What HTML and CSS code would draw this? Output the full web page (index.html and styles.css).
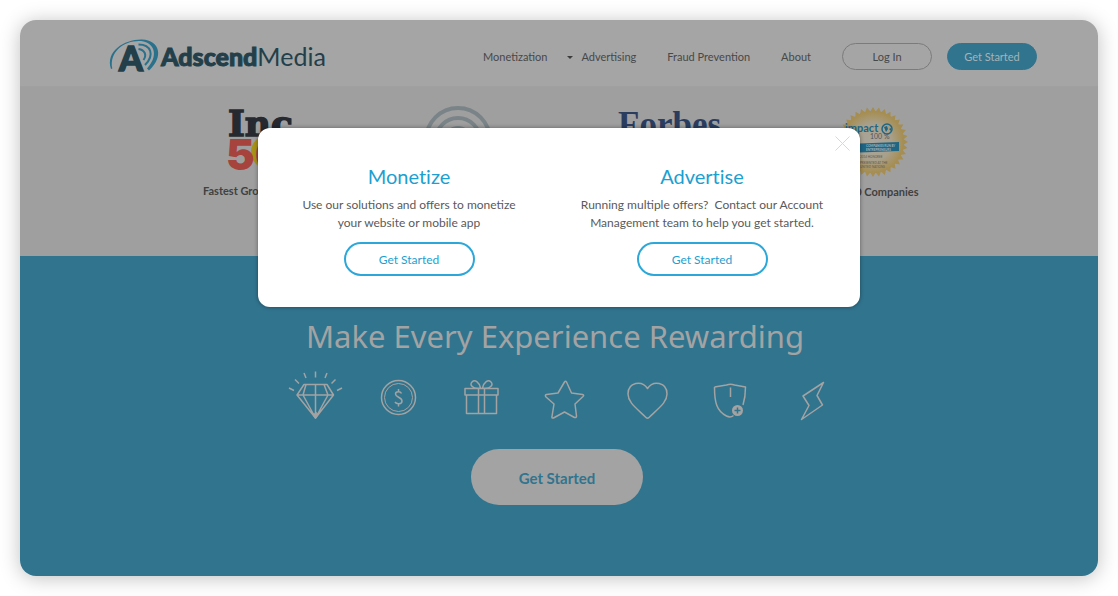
FILE: index.html
```html
<!DOCTYPE html>
<html lang="en">
<head>
<meta charset="utf-8">
<title>AdscendMedia</title>
<link rel="stylesheet" href="styles.css">
</head>
<body>
<div class="frame">
  <header class="header">
    <a class="logo" href="#">
      <svg class="logo-mark" viewBox="0 0 50 34" width="50" height="34" aria-hidden="true">
        <path class="swoosh" d="M2 30C-4 12 16 0 33 .500C51 1 55 18 40 31.500L38 29.500C49 18 47 4 32 2C16 1 0 12 3.300 29.500Z"/>
        <path class="wave" d="M29.500 5.500C42 5.500 46 16 36 26"/>
        <path class="wave" d="M29.500 10C36 11 38 16 34.500 21"/>
        <text class="mark-letter" x="10" y="32">A</text>
      </svg>
      <span class="logo-text"><b>Adscend</b>Media</span>
    </a>
    <nav class="nav">
      <a href="#">Monetization</a>
      <span class="caret"></span>
      <a href="#">Advertising</a>
      <a class="spaced" href="#">Fraud Prevention</a>
      <a class="spaced" href="#">About</a>
      <button class="pill spaced">Log In</button>
      <button class="pill pill-solid">Get Started</button>
    </nav>
  </header>

  <section class="press">
    <figure class="press-item press-inc">
      <svg viewBox="0 0 116 72" width="116" height="72" aria-hidden="true">
        <circle cx="65" cy="45" r="17" fill="#a99317"/>
        <text class="inc-word" x="25" y="29">Inc</text>
        <text class="inc-number" x="23" y="63">500</text>
      </svg>
      <figcaption>Fastest Growing</figcaption>
    </figure>
    <figure class="press-item press-signal">
      <svg viewBox="0 0 92 72" width="92" height="72" aria-hidden="true">
        <g fill="none" stroke="#7a8488" stroke-width="4">
          <circle cx="46" cy="33" r="32"/><circle cx="46" cy="33" r="22"/><circle cx="46" cy="33" r="12"/>
        </g>
      </svg>
    </figure>
    <figure class="press-item press-forbes">
      <svg viewBox="0 0 144 72" width="144" height="72" aria-hidden="true">
        <text class="forbes-word" x="21" y="29">Forbes</text>
      </svg>
    </figure>
    <figure class="press-item press-seal">
      <svg viewBox="0 0 84 73" width="84" height="73" aria-hidden="true">
        <defs>
          <radialGradient id="gold"><stop offset="0" stop-color="#a9a69f"/><stop offset=".6" stop-color="#a8a08b"/><stop offset="1" stop-color="#a68d50"/></radialGradient>
          <path id="tooth" d="M0-35L30.300 17.500H-30.300Z"/>
        </defs>
        <g fill="#a68d50" transform="translate(39 35)">
          <use href="#tooth"/>
          <use href="#tooth" transform="rotate(10)"/>
          <use href="#tooth" transform="rotate(20)"/>
          <use href="#tooth" transform="rotate(30)"/>
          <use href="#tooth" transform="rotate(40)"/>
          <use href="#tooth" transform="rotate(50)"/>
          <use href="#tooth" transform="rotate(60)"/>
          <use href="#tooth" transform="rotate(70)"/>
          <use href="#tooth" transform="rotate(80)"/>
          <use href="#tooth" transform="rotate(90)"/>
          <use href="#tooth" transform="rotate(100)"/>
          <use href="#tooth" transform="rotate(110)"/>
        </g>
        <circle cx="39" cy="35" r="31" fill="url(#gold)"/>
        <text class="seal-name" x="11" y="25">impact</text>
        <circle cx="53" cy="22" r="5" fill="none" stroke="#1f6584" stroke-width="1.500"/>
        <path d="M50 20l3-1 1 3-2 3zM55 22l2-1v3z" fill="#1f6584"/>
        <text class="seal-hundred" x="36" y="32">100 %</text>
        <path d="M12 37l53-2v9l-53 2z" fill="#1f6584"/>
        <text class="seal-band" x="32" y="40">COMPANIES RUN BY</text>
        <text class="seal-band" x="32" y="44">ENTREPRENEURS</text>
        <text class="seal-small" x="26" y="51">2014 HONOREE</text>
        <text class="seal-small" x="26" y="57">PRESENTED AT THE</text>
        <text class="seal-small" x="26" y="61">UNITED NATIONS</text>
      </svg>
      <figcaption>1,000 Companies</figcaption>
    </figure>
  </section>

  <section class="hero">
    <h1>Make Every Experience Rewarding</h1>
    <div class="icons">
      <svg viewBox="0 0 60 60" aria-hidden="true">
        <path d="M19 16.500h23l6.500 10.500L30.500 50 12 27ZM12 27h36.500M21 16.500l-3 10.500L30.500 50 43 27l-4-10.500M30.500 16.500V50M30 45h2"/>
        <path d="M28 46h5l-2.500 4z" fill="currentColor"/>
        <path d="M4 20l5 2.500M10 11.500l4 4M19 5l2 5M30.500 3.500v6M42 5l-2 5M50.500 11.500l-4 4M57 20l-5 2.500"/>
      </svg>
      <svg viewBox="0 0 60 60" aria-hidden="true">
        <circle cx="30.500" cy="29.500" r="17"/><circle cx="30.500" cy="29.500" r="14" stroke-width="1"/>
        <path d="M33.500 25.500c-1-2.500-6-2.500-6 .5 0 3.500 6.500 3 6.500 7 0 3.500-5.500 3.500-7 1M30.500 21v3M30.500 35.500v3"/>
      </svg>
      <svg viewBox="0 0 60 60" aria-hidden="true">
        <path d="M14 20.500h33v6.500H14ZM15.500 27v18.500h30V27M27.500 20.500v25M33.500 20.500v25M29 20C22 21 18 17 21 14c3-3 7 0 8.500 6M32 20c7 1 11-3 8-6-3-3-7 0-8.500 6"/>
      </svg>
      <svg viewBox="0 0 60 60" aria-hidden="true">
        <path d="M30.500 14q1-1.500 2 0l5 11 11 1.500q2 .5.500 2L41 36l1.500 12q0 2-2 1.500L30.500 44l-11 6q-2 .500-1.500-1.500L20 36l-8-7q-1.500-2 .5-2.500L24 25Z"/>
      </svg>
      <svg viewBox="0 0 60 60" aria-hidden="true">
        <path d="M30.500 20.500C25 12 11 14 11 26c0 8 7 13 18 23.500q1.500 1.500 3 0C43 39 50 34 50 26c0-12-14-14-19.500-5.500Z"/>
      </svg>
      <svg viewBox="0 0 60 60" aria-hidden="true">
        <path d="M14.500 19l12-2q4-1.500 8 0l11 2q0 10-2.500 18M14.500 19c0 15 2 24 12 29q4 2 7-.5M30.500 19.500V29"/>
        <circle cx="37.500" cy="42.500" r="5.500" fill="currentColor" stroke="none"/>
        <path class="cutout" d="M34.500 42.500h6M37.500 39.500v6"/>
      </svg>
      <svg viewBox="0 0 60 60" aria-hidden="true">
        <path d="M40.500 14.500L20 28l6 9.500-7.500 14L39.500 37 34 27.500Z"/>
      </svg>
    </div>
    <button class="hero-button">Get Started</button>
  </section>

  <div class="scrim">
    <div class="modal" role="dialog" aria-label="Get started">
      <button class="close" aria-label="Close">
        <svg viewBox="0 0 15 15" width="15" height="15" aria-hidden="true"><path d="M.5.5l14 14M14.500.5L.5 14.500"/></svg>
      </button>
      <div class="choice">
        <h2>Monetize</h2>
        <p>Use our solutions and offers to monetize<br>your website or mobile app</p>
        <button class="choice-button">Get Started</button>
      </div>
      <div class="choice">
        <h2>Advertise</h2>
        <p>Running multiple offers?&nbsp; Contact our Account<br>Management team to help you get started.</p>
        <button class="choice-button">Get Started</button>
      </div>
    </div>
  </div>
</div>
</body>
</html>
```
FILE: styles.css
```css
* { box-sizing: border-box; }
body {
  margin: 0;
  padding: 20px;
  min-height: 100vh;
  display: flex;
  background: #fff;
  font-family: Lato, "Liberation Sans", sans-serif;
}
button { font-family: inherit; padding: 0; cursor: pointer; }
a { color: inherit; text-decoration: none; }
h1, h2, p, figure { margin: 0; font-weight: 400; }
svg { overflow: visible; }

.frame {
  position: relative;
  flex: 1;
  display: flex;
  flex-direction: column;
  border-radius: 16px;
  overflow: hidden;
  box-shadow: 0 2px 20px rgba(0, 0, 0, .25);
}

.header {
  display: flex;
  align-items: center;
  justify-content: space-between;
  height: 67px;
  padding: 5px 61px 0 89px;
  background: #a5a5a5;
  border-bottom: 1px solid #a0a0a0;
}
.logo { display: flex; align-items: center; gap: 2px; color: #233f4a; }
.swoosh { fill: #2a718c; }
.wave { fill: none; stroke: #2a718c; stroke-width: 2; }
.mark-letter {
  font: 900 34px Lato, sans-serif;
  fill: #233f4a;
  stroke: #233f4a;
  stroke-width: 1.5;
}
.logo-text { font-size: 25px; line-height: 30px; }
.logo-text b { font-weight: 900; -webkit-text-stroke: 1px #233f4a; }

.nav { display: flex; align-items: center; padding-top: 1px; font-size: 11px; color: #484848; }
.caret {
  margin: 2px 8px 0 20px;
  border: 3px solid transparent;
  border-top-color: #3c3c3c;
  border-bottom: 0;
}
.spaced { margin-left: 31px; }
.pill {
  width: 90px;
  height: 27px;
  border: 1px solid #7b7b7b;
  border-radius: 14px;
  background: none;
  color: #484848;
  font-size: 11px;
}
.pill-solid { margin-left: 15px; border-color: #31748e; background: #31748e; color: #a5b3b8; }

.press {
  display: flex;
  justify-content: center;
  gap: 93px;
  height: 169px;
  padding: 20px 0 0 3px;
  background: #9f9f9f;
}
.press-item { display: flex; flex-direction: column; align-items: center; }
.press-item figcaption {
  margin-top: 4px;
  font-size: 11px;
  line-height: 16px;
  font-weight: 700;
  color: #414141;
  white-space: nowrap;
}
.press-inc { width: 116px; align-items: flex-start; }
.press-signal { width: 92px; }
.press-forbes { width: 144px; }
.press-seal { width: 84px; }
.inc-word {
  font: 700 36px "DejaVu Serif", serif;
  fill: #26292f;
  stroke: #26292f;
  stroke-width: 1.5;
}
.inc-number { font: 900 43px Inter, sans-serif; fill: #a5433c; }
.forbes-word { font: 700 35px "Liberation Serif", serif; fill: #2b3d5f; }
.seal-name { font: 700 11px Lato, sans-serif; fill: #1f6584; }
.seal-hundred { font: 400 7px Lato, sans-serif; fill: #555; }
.seal-band { font: 700 3px Lato, sans-serif; fill: #a5b3b8; }
.seal-small { font: 400 3px Lato, sans-serif; fill: #5c564a; }

.hero {
  flex: 1;
  display: flex;
  flex-direction: column;
  align-items: center;
  padding: 60px 4px 70px 0;
  background: #31748e;
  color: #a3a3a3;
}
.hero h1 { padding-right: 4px; font-family: "Noto Sans", sans-serif; font-size: 31px; line-height: 40px; }
.icons { display: flex; gap: 23px; margin-top: 12px; padding-left: 13px; }
.icons svg {
  width: 60px;
  height: 60px;
  fill: none;
  stroke: currentColor;
  stroke-width: 1.5;
  stroke-linejoin: round;
}
.icons .cutout { stroke: #31748e; }
.hero-button {
  width: 172px;
  height: 56px;
  margin-top: 21px;
  padding-top: 2px;
  border: 0;
  border-radius: 28px;
  background: #a3a3a3;
  color: #31748e;
  font-size: 15px;
  font-weight: 700;
}

.scrim {
  position: absolute;
  inset: 0;
  display: flex;
  justify-content: center;
  align-items: flex-start;
  padding: 108px 1px 0 0;
}
.modal {
  position: relative;
  display: grid;
  grid-template-columns: 1fr 1fr;
  width: 100%;
  max-width: 602px;
  padding: 36px 11px 31px 5px;
  border-radius: 12px;
  background: #fff;
  box-shadow: 0 0 4px rgba(0, 0, 0, .4);
}
.close { position: absolute; top: 8px; right: 10px; border: 0; background: none; line-height: 0; }
.close path { stroke: #d8d8d8; fill: none; }
.choice { display: flex; flex-direction: column; align-items: center; text-align: center; }
.choice h2 { font-size: 20px; line-height: 24px; font-variant-ligatures: none; color: #1c9fd1; }
.choice p { margin: 8px 0 10px; font-size: 12px; line-height: 18px; color: #5a5a5a; }
.choice-button {
  width: 131px;
  height: 34px;
  border: 2px solid #2ba8d9;
  border-radius: 17px;
  background: none;
  color: #1c9fd1;
  font-size: 12px;
}
```
